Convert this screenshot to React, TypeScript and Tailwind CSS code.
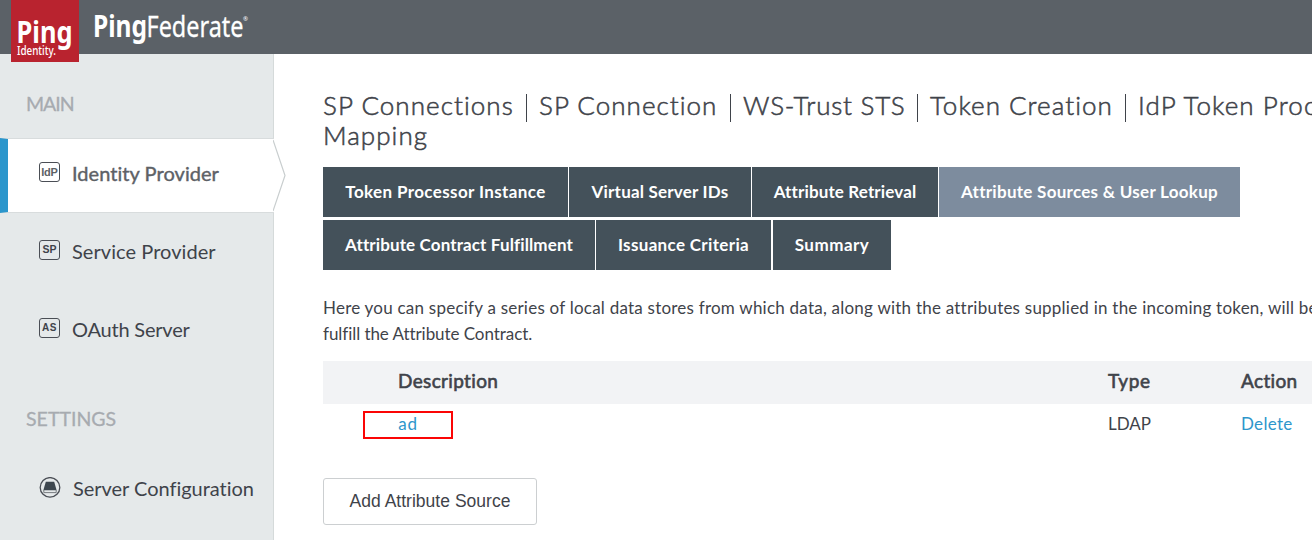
import type { ReactNode } from "react";

function Badge({ label, style }: { label: string; style: string }) {
  return (
    <span
      className={`flex h-5 w-[21px] shrink-0 items-center justify-center rounded-[3px] border border-[#4a4e55] font-['Liberation_Sans',sans-serif] leading-none font-bold ${style}`}
    >
      {label}
    </span>
  );
}

function ServerIcon() {
  return (
    <svg className="mb-[5px] h-[21px] w-[22px] shrink-0" viewBox="0 0 22 21" fill="none">
      <circle cx="11" cy="10.4" r="9.8" stroke="#4a4e55" strokeWidth="1.3" />
      <path d="M6.8 4.8h8.4l2.4 8.4H4.4z" fill="#3d464e" />
      <path d="M4.8 13v2.6h12.4V13" stroke="#6b7075" strokeWidth="0.9" />
    </svg>
  );
}

function SectionTitle({ children, className }: { children: string; className: string }) {
  return <h2 className={`pl-[26px] text-[19.5px] leading-6 text-[#a7abb0] [-webkit-text-stroke:0.3px] ${className}`}>{children}</h2>;
}

function NavItem({ icon, label, style }: { icon: ReactNode; label: string; style: string }) {
  return (
    <li className="flex h-[78px] items-center gap-3 pl-[39px]">
      {icon}
      <span className={`text-[20px] leading-6 whitespace-nowrap ${style}`}>{label}</span>
    </li>
  );
}

function Sidebar() {
  return (
    <aside className="w-[274px] shrink-0 border-r border-[#d5dada] bg-[#e5e9ea] pt-[38px]">
      <SectionTitle className="tracking-[-1px]">MAIN</SectionTitle>
      <ul className="mt-[22px]">
        <li className="relative flex h-[75px] w-[274px] items-center gap-3 border-y border-l-8 border-y-[#d8dcdd] border-l-[#2b96cc] bg-white pl-[31px] text-[#5d6166]">
          <Badge label="IdP" style="mb-[7px] text-[11px] tracking-[-0.2px]" />
          <span className="mb-[5px] text-[20px] leading-6 tracking-[0.05px] [-webkit-text-stroke:0.4px] whitespace-nowrap">Identity Provider</span>
          <svg className="absolute top-0 left-[265px] h-[73px] w-[13px]" viewBox="0 0 13 73" fill="none">
            <path d="M0 1 12 36.5 0 72" fill="white" stroke="#c9cecf" strokeWidth="1.2" />
          </svg>
        </li>
        <NavItem icon={<Badge label="SP" style="mb-[5px] text-[10.5px]" />} label="Service Provider" style="mb-0.5 tracking-[0.06px]" />
        <NavItem icon={<Badge label="AS" style="mb-[5px] text-[10px] tracking-[0.5px]" />} label="OAuth Server" style="mb-0.5 tracking-[-0.2px]" />
      </ul>
      <SectionTitle className="mt-[38px] tracking-[0.02px]">SETTINGS</SectionTitle>
      <ul className="mt-[20px]">
        <NavItem icon={<ServerIcon />} label="Server Configuration" style="mb-[5px] tracking-[-0.03px]" />
      </ul>
    </aside>
  );
}

function Header() {
  return (
    <header className="relative flex h-[54px] shrink-0 bg-[#5b6167] pl-[11px]">
      <svg className="z-10 h-[62px] w-[240px] overflow-visible" viewBox="0 0 240 62" fill="white">
        <rect width="68" height="62" fill="#b9232f" />
        <text x="5.5" y="43" className="font-['Noto_Sans',sans-serif] text-[31px] font-bold" textLength="56" lengthAdjust="spacingAndGlyphs">Ping</text>
        <text x="6" y="55" className="font-['Noto_Sans',sans-serif] text-[13px] font-medium" textLength="39" lengthAdjust="spacingAndGlyphs">Identity.</text>
        <text x="82" y="36.5" className="font-['Noto_Sans',sans-serif] text-[30px] font-bold" textLength="54" lengthAdjust="spacingAndGlyphs">Ping</text>
        <text x="135.5" y="36.5" className="font-['Noto_Sans',sans-serif] text-[29px] [stroke:white] [stroke-width:0.3px]" textLength="97" lengthAdjust="spacingAndGlyphs">Federate</text>
        <text x="232" y="21" className="font-['Noto_Sans',sans-serif] text-[6px]">®</text>
      </svg>
    </header>
  );
}

function Tab({ label, size, active = false }: { label: string; size: string; active?: boolean }) {
  return (
    <button
      className={`flex h-[50px] items-center justify-center text-[17px] font-bold whitespace-nowrap text-white ${size} ${active ? "bg-[#7d8c9e]" : "bg-[#44515a]"}`}
    >
      {label}
    </button>
  );
}

const crumbs = [
  { label: "SP Connections", style: "w-[203px] tracking-[1.05px]" },
  { label: "SP Connection", style: "w-[191px] tracking-[1.03px]" },
  { label: "WS-Trust STS", style: "w-[174px] tracking-[0.75px]" },
  { label: "Token Creation", style: "w-[195px] tracking-[1.05px]" },
  { label: "IdP Token Processor", style: "tracking-[1.1px]" },
];

export default function App() {
  return (
    <div className="flex h-[540px] w-full flex-col overflow-hidden bg-white font-['Lato',sans-serif] text-[#3f434a]">
      <Header />
      <div className="flex min-h-0 flex-1">
        <Sidebar />
        <main className="min-w-0 flex-1 overflow-hidden pt-9 pl-[49px]">
          <h1 className="text-[26px] leading-[30px] font-light whitespace-nowrap [-webkit-text-stroke:0.55px]">
            <span className="flex h-[30px] items-center">
              {crumbs.map((crumb, i) => (
                <span key={crumb.label} className="flex shrink-0 items-center">
                  {i > 0 && <span className="mt-1 -mb-0.5 mr-3 h-7 w-px bg-[#3f434a]" />}
                  <span className={crumb.style}>{crumb.label}</span>
                </span>
              ))}
            </span>
            <span className="block tracking-[1.05px]">Mapping</span>
          </h1>
          <nav className="mt-[17px] flex flex-col gap-[3px]">
            <div className="flex gap-px">
              <Tab label="Token Processor Instance" size="w-[245px] tracking-[0.38px]" />
              <Tab label="Virtual Server IDs" size="w-[182px] tracking-[0.2px]" />
              <Tab label="Attribute Retrieval" size="w-[186px] tracking-[0.13px]" />
              <Tab label="Attribute Sources & User Lookup" size="w-[301px] tracking-[0.28px]" active />
            </div>
            <div className="flex gap-px">
              <Tab label="Attribute Contract Fulfillment" size="w-[272px] tracking-[0.12px]" />
              <Tab label="Issuance Criteria" size="w-[175px] tracking-[0.34px]" />
              <Tab label="Summary" size="ml-px w-[118px] tracking-[0.5px]" />
            </div>
          </nav>
          <p className="mt-[25px] text-[17px] leading-[26px] whitespace-nowrap">
            <span className="tracking-[0.23px]">
              Here you can specify a series of local data stores from which data, along with the attributes supplied in the incoming token, will be used to
            </span>
            <br />
            <span className="tracking-[-0.06px]">fulfill the Attribute Contract.</span>
          </p>
          <div className="mt-[14px] grid h-[43px] grid-cols-[785px_133px_1fr] items-center bg-[#f2f3f5] pb-0.5 text-[19px] [-webkit-text-stroke:0.6px]">
            <span className="pl-[75px] tracking-[0.35px]">Description</span>
            <span className="tracking-[0.7px]">Type</span>
            <span className="tracking-[0.35px]">Action</span>
          </div>
          <div className="grid h-[42px] grid-cols-[785px_133px_1fr] items-center text-[17px]">
            <span className="ml-10 flex h-7 w-[90px] items-center justify-center border-2 border-[#fb0505] pb-0.5 tracking-[0.8px] text-[#2e96cb]">ad</span>
            <span className="pb-0.5 tracking-[0.01px]">LDAP</span>
            <a className="pb-0.5 tracking-[0.3px] text-[#2e96cb]">Delete</a>
          </div>
          <button className="mt-8 flex h-[47px] w-[214px] items-center justify-center rounded-[3px] border border-[#cccfd1] font-['Liberation_Sans',sans-serif] text-[17.5px] tracking-[0.02px]">
            Add Attribute Source
          </button>
        </main>
      </div>
    </div>
  );
}
